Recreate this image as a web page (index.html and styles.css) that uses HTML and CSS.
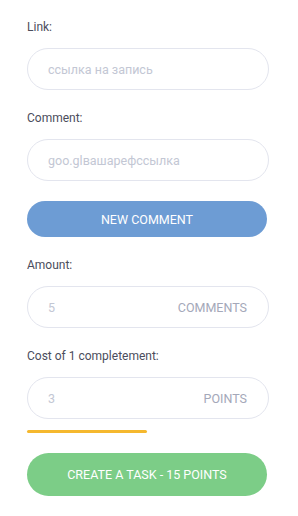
FILE: index.html
```html
<!DOCTYPE html>
<html>
<head>
<meta charset="utf-8">
<link rel="stylesheet" href="styles.css">
</head>
<body>
<form class="task-form">
  <div class="field">
    <label class="label">Link:</label>
    <div class="input"><span class="placeholder">ссылка на запись</span></div>
  </div>
  <div class="field">
    <label class="label">Comment:</label>
    <div class="input"><span class="placeholder">goo.glвашарефссылка</span></div>
  </div>
  <div class="btn btn-blue">NEW COMMENT</div>
  <div class="field">
    <label class="label">Amount:</label>
    <div class="input"><span class="placeholder">5</span><span class="unit">COMMENTS</span></div>
  </div>
  <div class="field">
    <label class="label">Cost of 1 completement:</label>
    <div class="input"><span class="placeholder">3</span><span class="unit">POINTS</span></div>
  </div>
  <div class="progress"><div class="progress-bar" style="width: 120px"></div></div>
  <div class="btn btn-green">CREATE A TASK - 15 POINTS</div>
</form>
</body>
</html>
```
FILE: styles.css
```css
* { box-sizing: border-box; }
html, body { margin: 0; padding: 0; background: #fff; }
body { font-family: Roboto, "Noto Sans", sans-serif; }
.task-form {
  display: flex;
  flex-direction: column;
  padding: 19px 29px 0 27px;
  width: 298px;
}
.field { display: flex; flex-direction: column; gap: 13px; margin-bottom: 20px; }
.label {
  font-size: 12px;
  line-height: 16px;
  color: #4b4d5c;
}
.input {
  height: 42px;
  border: 1px solid #e3e5ee;
  border-radius: 21px;
  display: flex;
  align-items: center;
  justify-content: space-between;
  padding: 0 21px 0 20px;
  font-size: 12.5px;
}
.placeholder { color: #c3c7d4; }
.unit { color: #a4a8b9; }
.btn {
  height: 36px;
  border-radius: 18px;
  width: 240px;
  display: flex;
  align-items: center;
  justify-content: center;
  color: #fff;
  font-size: 12.5px;
  margin-bottom: 20px;
}
.btn-blue { background: #6d9cd4; }
.btn-green { background: #7ccd87; height: 43px; border-radius: 22px; }
.progress { height: 3px; margin-top: -9px; margin-bottom: 20px; }
.progress-bar { height: 3px; background: #f5b82e; border-radius: 2px; }
```
